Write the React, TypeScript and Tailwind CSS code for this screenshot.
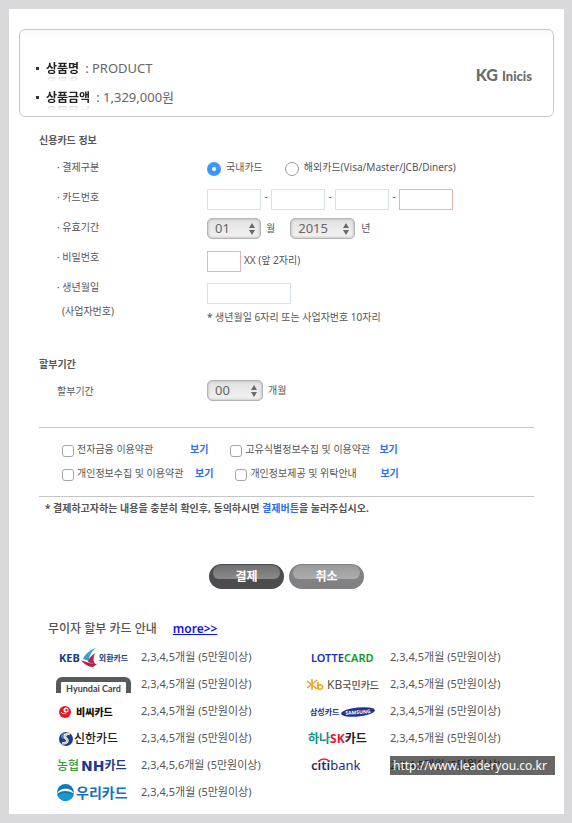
import { ReactNode } from "react";

const cardLabels = ["첫째 자리", "둘째 자리", "셋째 자리", "넷째 자리"];

const agreements = [
  { label: "전자금융 이용약관", width: "w-[128px]", offset: "" },
  { label: "고유식별정보수집 및 이용약관", width: "w-[149px]", offset: "ml-[22px]" },
  { label: "개인정보수집 및 이용약관", width: "w-[133px]", offset: "" },
  { label: "개인정보제공 및 위탁안내", width: "w-[145px]", offset: "ml-[22px]" },
];

function App() {
  return (
    <div className="bg-[#d9d9db] py-[9px] pl-[9px] pr-2 font-['Noto_Sans','Noto_Sans_CJK_KR',sans-serif] text-[11px] text-[#555]">
      <main className="bg-white pb-2 pt-5">
        <header className="mx-[10px] flex items-center justify-between rounded-md border border-[#c6c8c9] bg-linear-to-b from-[#fafafa] to-white to-10% pb-1 pl-4 pr-[21px] pt-6">
          <ul className="text-[13px] text-[#666]">
            <Product label="상품명" value="PRODUCT" />
            <Product label="상품금액" value="1,329,000원" />
          </ul>
          <p className="pb-4 font-['Lato',sans-serif] text-[13px] font-black leading-5 text-[#6b6b6b]">
            <span className="mr-1 text-[16px]">KG</span>
            Inicis
          </p>
        </header>

        <form className="pl-[30px] pr-[30px] pt-[11px] text-[10px]">
          <h2 className="font-bold leading-6">신용카드 정보</h2>
          <Row label="· 결제구분">
            <div className="flex leading-[30px]">
              <Radio label="국내카드" checked />
              <Radio label="해외카드(Visa/Master/JCB/Diners)" />
            </div>
          </Row>
          <Row label="· 카드번호">
            <div className="flex pt-[7px]">
              {cardLabels.map((label, i) => (
                <div className="flex" key={label}>
                  {i > 0 && <span className="w-[10px] text-center">-</span>}
                  <TextBox
                    label={`카드번호 ${label}`}
                    className={
                      i === 3 ? "w-[54px] border-[#e8b4b4]" : "w-[54px] border-[#d8e2ec]"
                    }
                  />
                </div>
              ))}
            </div>
          </Row>
          <Row label="· 유효기간">
            <div className="flex pt-[6px] leading-[21px]">
              <Select label="월" value="01" className="w-[54px]" />
              <span className="ml-[5px] mr-[15px]">월</span>
              <Select label="년" value="2015" className="w-[65px]" />
              <span className="ml-[6px]">년</span>
            </div>
          </Row>
          <Row label="· 비밀번호">
            <div className="flex pt-[9px] leading-[18px]">
              <TextBox label="비밀번호 앞 2자리" className="w-[34px] border-[#e8b4b4]" />
              <span className="ml-[3px]">XX (앞 2자리)</span>
            </div>
          </Row>
          <Row label="· 생년월일" sub="(사업자번호)">
            <div className="pt-[11px]">
              <TextBox label="생년월일" className="block w-[84px] border-[#d8e2ec]" />
              <p className="leading-[26px]">* 생년월일 6자리 또는 사업자번호 10자리</p>
            </div>
          </Row>

          <h2 className="mt-[22px] font-bold leading-6">할부기간</h2>
          <Row label="할부기간">
            <div className="flex pt-1 leading-[21px]">
              <Select label="할부기간" value="00" className="w-[56px]" />
              <span className="ml-[5px]">개월</span>
            </div>
          </Row>

          <div className="mt-[21px] border-y border-[#c4c6c7] pb-[11px] pl-[23px] pt-[9px] leading-6">
            {[0, 2].map((start) => (
              <div className="flex" key={start}>
                {agreements.slice(start, start + 2).map(({ label, width, offset }) => (
                  <div className={`flex ${offset}`} key={label}>
                    <label className={`flex whitespace-nowrap ${width}`}>
                      <input
                        type="checkbox"
                        className="mr-[3px] mt-2 size-3 appearance-none rounded-[3px] border border-[#a6a6a6] bg-white"
                      />
                      {label}
                    </label>
                    <a href="#" className="font-bold text-[#2a6df4]">
                      보기
                    </a>
                  </div>
                ))}
              </div>
            ))}
          </div>
          <p className="pl-[6px] font-bold leading-[22px]">
            * 결제하고자하는 내용을 충분히 확인후, 동의하시면{" "}
            <span className="text-[#2a6df4]">결제버튼</span>을 눌러주십시오.
          </p>

          <div className="mt-[45px] flex justify-center gap-[5px]">
            <PillButton dark>결제</PillButton>
            <PillButton>취소</PillButton>
          </div>
        </form>

        <section className="pl-[39px] pr-[9px] pt-7">
          <h2 className="flex gap-4 text-[12px] font-medium leading-6">
            무이자 할부 카드 안내
            <a href="#" className="font-semibold text-[#0d14e8] underline">
              more&gt;&gt;
            </a>
          </h2>
          <ul className="grid grid-cols-2 pl-[9px] pt-[3px]">
            <Card logo={<Keb />} />
            <Card logo={<Lotte />} />
            <Card logo={<Hyundai />} />
            <Card logo={<Kb />} />
            <Card logo={<Bc />} />
            <Card logo={<Samsung />} />
            <Card logo={<Shinhan />} />
            <Card logo={<Hana />} />
            <Card logo={<Nh />} months="2,3,4,5,6개월" />
            <Card logo={<Citi />}>
              <span className="absolute left-[84px] top-1 whitespace-nowrap bg-black/60 pl-[3px] pr-2 text-[12px] leading-[19px] text-white">
                http://www.leaderyou.co.kr
              </span>
            </Card>
            <Card logo={<Woori />} />
          </ul>
        </section>
      </main>
    </div>
  );
}

const Product = ({ label, value }: { label: string; value: string }) => (
  <li className="flex h-[29px] items-center">
    <span className="mr-[7px] size-[3px] bg-[#333]" />
    <span className="text-[12px] font-bold leading-none text-[#222] [-webkit-box-reflect:below_1px_linear-gradient(transparent_50%,rgba(0,0,0,0.2))]">
      {label}
    </span>
    <span className="ml-[6px]">: {value}</span>
  </li>
);

const Row = ({
  label,
  sub,
  children,
}: {
  label: string;
  sub?: string;
  children: ReactNode;
}) => (
  <div className="grid min-h-[30px] grid-cols-[150px_1fr] pl-[18px]">
    <div className="leading-[30px]">
      {label}
      {sub && <p className="pl-[5px] leading-[18px]">{sub}</p>}
    </div>
    {children}
  </div>
);

const Radio = ({ label, checked }: { label: string; checked?: boolean }) => (
  <label className="mr-[22px] flex">
    <input
      type="radio"
      name="cardType"
      defaultChecked={checked}
      className="mr-[5px] mt-[10px] size-[14px] appearance-none rounded-full border border-[#999] bg-white checked:border-[5px] checked:border-[#3b99fc]"
    />
    {label}
  </label>
);

const TextBox = ({ label, className }: { label: string; className: string }) => (
  <input type="text" aria-label={label} className={`h-[21px] border px-1 ${className}`} />
);

const Select = ({
  label,
  value,
  className,
}: {
  label: string;
  value: string;
  className: string;
}) => (
  <div className={`relative ${className}`}>
    <select
      aria-label={label}
      className="block h-[21px] w-full appearance-none rounded-[5px] border border-[#b4b4b4] bg-linear-to-b from-[#e2e2e2] to-[#f2f2f2] pl-[7px] text-[13px] leading-[19px] text-[#666] shadow-[inset_0_0_3px_#aaa]"
    >
      <option>{value}</option>
    </select>
    <svg
      viewBox="0 0 6 12"
      className="pointer-events-none absolute right-[6px] top-[5px] h-3 w-[6px]"
      fill="#6a6a6a"
    >
      <path d="M3 0L6 5H0zM0 7H6L3 12z" />
    </svg>
  </div>
);

const PillButton = ({ dark, children }: { dark?: boolean; children: ReactNode }) => (
  <button
    type="button"
    className={`relative h-[25px] w-[75px] rounded-full text-[12px] font-bold text-white ${
      dark ? "bg-[#4c4c4e]" : "bg-[#818183]"
    }`}
  >
    <span className="absolute inset-x-1 top-px h-[14px] rounded-t-lg rounded-b-md bg-linear-to-b from-white/20 to-white/35" />
    <span className="relative">{children}</span>
  </button>
);

const Card = ({
  logo,
  months = "2,3,4,5개월",
  children,
}: {
  logo: ReactNode;
  months?: string;
  children?: ReactNode;
}) => (
  <li className="relative flex h-[27px] items-center whitespace-nowrap">
    <div className="flex w-[84px] items-center leading-none">{logo}</div>
    {months} (5만원이상)
    {children}
  </li>
);

const Keb = () => (
  <>
    <span className="ml-[2px] text-[11px] font-bold text-[#14407f]">KEB</span>
    <svg viewBox="0 0 18 20" className="ml-px h-5 w-[18px]">
      <path d="M15 0C9 2 4 6 2 11L8 13C8 8 10 4 15 0z" fill="#2fa3d8" />
      <path d="M14 5C10 8 7 11 7 14L15 17C12 14 12 10 14 5z" fill="#c5224b" />
      <path d="M0 12C5 14 10 16 16 16L12 19C7 19 3 16 0 12z" fill="#b81f48" />
    </svg>
    <span className="text-[8px] font-bold text-[#14407f]">외환카드</span>
  </>
);

const Hyundai = () => (
  <span className="-ml-px flex h-4 w-[75px] items-end justify-center rounded-t-md border-x-[5px] border-t-[5px] border-[#58595b] font-['Lato',sans-serif] text-[9px] font-bold text-[#444]">
    Hyundai Card
  </span>
);

const Bc = () => (
  <>
    <svg viewBox="0 0 12 12" className="ml-[2px] mr-[5px] size-3">
      <circle cx="6" cy="6" r="6" fill="#e5192a" />
      <circle cx="7" cy="4" r="2.500" fill="#fff" />
      <circle cx="7.500" cy="4" r="1.200" fill="#e5192a" />
      <path d="M2 6C3 8 5 8 7 7" stroke="#fff" fill="none" />
    </svg>
    <span className="text-[10px] font-black text-[#111]">비씨카드</span>
  </>
);

const Shinhan = () => (
  <>
    <svg viewBox="0 0 14 14" className="ml-[2px] mr-px size-[14px]">
      <circle cx="7" cy="7" r="7" fill="#173f8c" />
      <circle cx="5" cy="4" r="3" fill="#3f82c4" />
      <path
        d="M11 2C7 1 4 4 7 6.500C10 9 8 12 3 11"
        stroke="#fff"
        strokeWidth="2.400"
        fill="none"
      />
      <path d="M11 2C7 1 4 4 7 6.500C10 9 8 12 3 11" stroke="#d0a648" fill="none" />
    </svg>
    <span className="text-[12px] font-medium text-[#222]">신한카드</span>
  </>
);

const Nh = () => (
  <span className="flex items-center text-[12px] font-bold text-[#20398a]">
    <span className="mr-[2px] text-[12px] font-medium text-[#35a13b]">농협</span>
    <span className="font-['DejaVu_Sans',sans-serif] text-[14px]">NH</span>카드
  </span>
);

const Woori = () => (
  <>
    <svg viewBox="0 0 17 17" className="mr-[2px] size-[17px]">
      <circle cx="8.500" cy="8.500" r="8.500" fill="#0f78bd" />
      <path d="M0 10C2 3 15 3 17 10C13 6 4 6 0 10z" fill="#fff" />
      <path d="M1 12C3 8 14 8 16 12C14 15 12 17 8.500 17S3 15 1 12z" fill="#1a98d2" />
    </svg>
    <span className="text-[14px] font-bold text-[#1274bb]">우리카드</span>
  </>
);

const Lotte = () => (
  <span className="ml-[5px] text-[11px] font-semibold text-[#1c31b5]">
    LOTTE<span className="text-[#0d9b22]">CARD</span>
  </span>
);

const Kb = () => (
  <>
    <svg
      viewBox="0 0 17 13"
      className="ml-px mr-[3px] h-[13px] w-[17px]"
      fill="none"
      stroke="#f5a01c"
      strokeWidth="1.600"
    >
      <path d="M5 1V12M0 3L10 11M0 10L10 2M11 4V11" />
      <ellipse cx="13" cy="9" rx="2.500" ry="2.200" />
    </svg>
    <span className="text-[12px] text-[#5b5048]">KB</span>
    <span className="text-[10px] font-medium text-[#5b5048]">국민카드</span>
  </>
);

const Samsung = () => (
  <>
    <span className="ml-[4px] mr-[2px] text-[8px] font-bold text-[#23348c]">삼성카드</span>
    <svg viewBox="0 0 34 12" className="h-3 w-[34px]">
      <ellipse cx="17" cy="6" rx="17" ry="4.500" fill="#20348f" transform="rotate(-6 17 6)" />
      <text
        x="17"
        y="8"
        textAnchor="middle"
        fontSize="5"
        fontWeight="700"
        fill="#fff"
        transform="rotate(-4 17 6)"
      >
        SAMSUNG
      </text>
    </svg>
  </>
);

const Hana = () => (
  <span className="ml-[2px] flex items-center text-[12px] font-bold text-[#222]">
    <span className="text-[#11918b]">하나</span>
    <span className="text-[#e0182d]">SK</span>카드
  </span>
);

const Citi = () => (
  <span className="relative ml-[5px] text-[13px] text-[#1f2c75]">
    <svg
      viewBox="0 0 12 4"
      className="absolute left-[7px] top-[-1px] h-1 w-3"
      fill="none"
      stroke="#e3242f"
      strokeWidth="1.500"
    >
      <path d="M0 4C3 0 9 0 12 4" />
    </svg>
    <span className="font-semibold">citi</span>bank
  </span>
);

export default App;
